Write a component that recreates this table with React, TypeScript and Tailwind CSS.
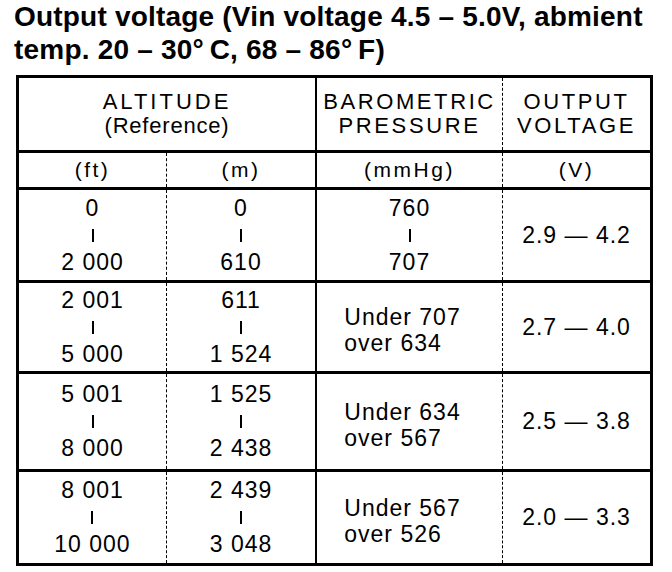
import React from "react";

type Row = {
  h: string;
  ft: [string, string];
  m: [string, string];
  baro: { kind: "range"; v: [string, string] } | { kind: "text"; v: [string, string] };
  volt: string;
  last?: boolean;
};

const rows: Row[] = [
  { h: "h-[93px]", ft: ["0", "2 000"], m: ["0", "610"], baro: { kind: "range", v: ["760", "707"] }, volt: "2.9 — 4.2" },
  { h: "h-[91px]", ft: ["2 001", "5 000"], m: ["611", "1 524"], baro: { kind: "text", v: ["Under 707", "over 634"] }, volt: "2.7 — 4.0" },
  { h: "h-[98px]", ft: ["5 001", "8 000"], m: ["1 525", "2 438"], baro: { kind: "text", v: ["Under 634", "over 567"] }, volt: "2.5 — 3.8" },
  { h: "h-[91px]", ft: ["8 001", "10 000"], m: ["2 439", "3 048"], baro: { kind: "text", v: ["Under 567", "over 526"] }, volt: "2.0 — 3.3", last: true },
];

function Range({ v }: { v: [string, string] }) {
  return (
    <div className="flex flex-col items-center leading-[27px]">
      <div>{v[0]}</div>
      <div className="h-[27px] flex items-center">
        <div className="w-[2px] h-[13px] bg-black" />
      </div>
      <div>{v[1]}</div>
    </div>
  );
}

export default function App() {
  return (
    <div className="w-[672px] h-[572px] bg-white text-black overflow-hidden font-['Liberation_Sans',Arial,sans-serif]">
      <div className="pl-[14px] text-[28px] leading-[33px] font-bold tracking-[0.2px]">
        <div>Output voltage (Vin voltage 4.5 – 5.0V, abmient</div>
        <div>temp. 20 – 30°{"\u2009"}C, 68 – 86°{"\u2009"}F)</div>
      </div>
      <div className="ml-[16px] mt-[9px] w-[637px] border-[3px] border-black text-[23px] tracking-[1px]">
        {/* header */}
        <div className="grid grid-cols-[147px_149px_187px_148px] h-[75px] border-b-[3px] border-black">
          <div className="col-span-2 flex flex-col items-center justify-center leading-[24px] text-[22px]">
            <div className="tracking-[3px]">ALTITUDE</div>
            <div className="tracking-[0.8px]">(Reference)</div>
          </div>
          <div className="border-l-2 border-black flex flex-col items-center justify-center leading-[24px] text-[22px] tracking-[2.6px]">
            <div>BAROMETRIC</div>
            <div>PRESSURE</div>
          </div>
          <div className="border-l border-dashed border-black flex flex-col items-center justify-center leading-[24px] text-[22px] tracking-[2.6px]">
            <div>OUTPUT</div>
            <div>VOLTAGE</div>
          </div>
        </div>
        {/* subheader */}
        <div className="grid grid-cols-[147px_149px_187px_148px] h-[37px] border-b-[3px] border-black text-[21px] tracking-[2.5px]">
          <div className="flex items-center justify-center">(ft)</div>
          <div className="border-l border-dashed border-black flex items-center justify-center">(m)</div>
          <div className="border-l-2 border-black flex items-center justify-center">(mmHg)</div>
          <div className="border-l border-dashed border-black flex items-center justify-center">(V)</div>
        </div>
        {rows.map((r, i) => (
          <div
            key={i}
            className={`grid grid-cols-[147px_149px_187px_148px] ${r.h} ${r.last ? "" : "border-b-[3px] border-black"}`}
          >
            <div className="flex items-center justify-center">
              <Range v={r.ft} />
            </div>
            <div className="border-l border-dashed border-black flex items-center justify-center">
              <Range v={r.m} />
            </div>
            <div className="border-l-2 border-black flex items-center justify-center">
              {r.baro.kind === "range" ? (
                <Range v={r.baro.v} />
              ) : (
                <div className="flex flex-col items-start leading-[26px] pt-[6px] pr-[14px]">
                  <div>{r.baro.v[0]}</div>
                  <div>{r.baro.v[1]}</div>
                </div>
              )}
            </div>
            <div className="border-l border-dashed border-black flex items-center justify-center">
              {r.volt}
            </div>
          </div>
        ))}
      </div>
    </div>
  );
}
